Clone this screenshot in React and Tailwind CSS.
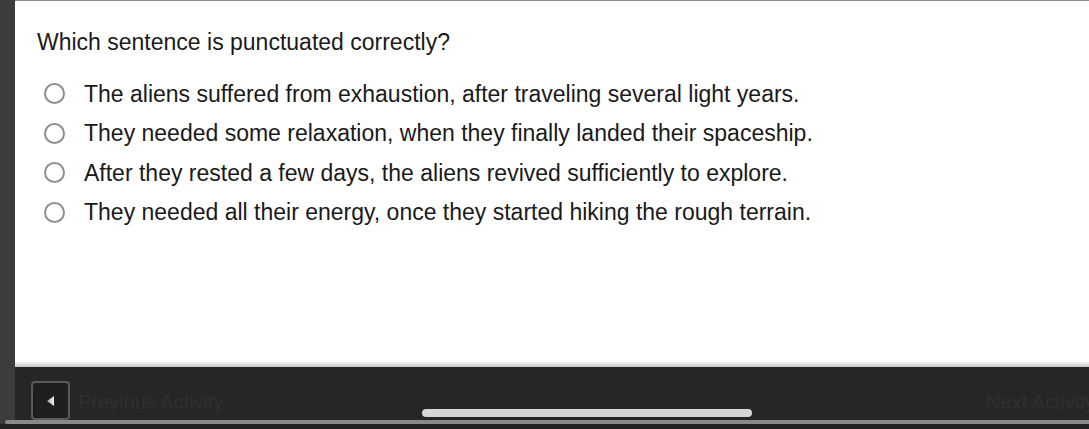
export default function App() {
  const options = [
    "The aliens suffered from exhaustion, after traveling several light years.",
    "They needed some relaxation, when they finally landed their spaceship.",
    "After they rested a few days, the aliens revived sufficiently to explore.",
    "They needed all their energy, once they started hiking the rough terrain.",
  ];
  return (
    <div
      className="relative flex h-[429px] w-[1089px] overflow-hidden bg-[#3a3a3a]"
      style={{ fontFamily: '"Liberation Sans", Arial, sans-serif' }}
    >
      <div className="w-[15px] shrink-0 bg-[#3c3c3c]" />
      <div className="flex flex-1 flex-col overflow-hidden">
        <div className="relative flex h-[367px] flex-col border-t border-[#8c8c8c] bg-white pl-[22px] pt-[26px]">
          <div className="text-[23px] leading-[30px] text-[#1a1a1a]">
            Which sentence is punctuated correctly?
          </div>
          <div className="mt-[17px] flex flex-col">
            {options.map((o) => (
              <div key={o} className="flex h-[39.5px] items-center">
                <div className="ml-[7px] h-[21px] w-[21px] rounded-full border-2 border-[#8e8e8e]" />
                <div className="ml-[19px] text-[23px] leading-[30px] text-[#1a1a1a]">{o}</div>
              </div>
            ))}
          </div>
          <div className="absolute bottom-0 left-0 right-0 h-[6px] bg-gradient-to-b from-white to-[#c8c8c8]" />
        </div>
        <div className="relative flex flex-1 items-start bg-[#262626] pt-[14px]">
          <div className="ml-[16px] flex h-[39px] w-[39px] shrink-0 items-center justify-center rounded-[4px] border-2 border-[#5a5a5a] bg-[#1f1f1f]">
            <svg width="10" height="12" viewBox="0 0 10 12">
              <defs>
                <linearGradient id="tg" x1="0" y1="0" x2="1" y2="0">
                  <stop offset="0" stopColor="#aaaaaa" />
                  <stop offset="1" stopColor="#f0f0f0" />
                </linearGradient>
              </defs>
              <polygon points="1,6 8,1 8,11" fill="url(#tg)" />
            </svg>
          </div>
          <div className="ml-[8px] mt-[6px] whitespace-nowrap text-[20px] text-[#303030]">Previous Activity</div>
          <div className="flex-1" />
          <div className="mr-[-6px] mt-[6px] shrink-0 whitespace-nowrap text-[20px] text-[#303030]">Next Activity</div>
          <div className="absolute bottom-[12px] left-[407px] h-[8px] w-[330px] rounded-full bg-[#d6d6d6]" />
        </div>
      </div>
      <div className="absolute bottom-[5px] left-[5px] right-0 h-[4px] rounded-l-full bg-[#8a8a8a]" />
      <div className="absolute bottom-0 left-0 right-0 h-[5px] bg-[#222]" />
    </div>
  );
}
